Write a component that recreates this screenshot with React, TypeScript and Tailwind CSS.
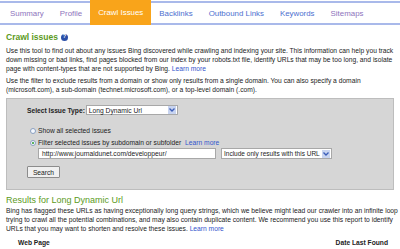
import React from 'react'

const tabs = [
    { label: 'Summary', color: 'text-[#8e74bd]' },
    { label: 'Profile', color: 'text-[#8e74bd]' },
    { label: 'Crawl Issues', active: true },
    { label: 'Backlinks', color: 'text-[#4d6fcf]' },
    { label: 'Outbound Links', color: 'text-[#4d6fcf]' },
    { label: 'Keywords', color: 'text-[#4d6fcf]' },
    { label: 'Sitemaps', color: 'text-[#8e74bd]' },
]

const Chevron = () => (
    <span className="ml-auto flex h-[8px] w-[8px] shrink-0 items-center justify-center bg-[#c8d4f0]">
        <svg width="6" height="4" viewBox="0 0 6 4">
            <path d="M0.5 0.5 L3 3 L5.5 0.5" stroke="#3b5db8" strokeWidth="1.3" fill="none" />
        </svg>
    </span>
)

const Radio = ({ checked }: { checked?: boolean }) => (
    <span className="flex h-[6px] w-[6px] items-center justify-center rounded-full border border-[#8aa0c0] bg-[#f4f8ff]">
        {checked && <span className="h-[2px] w-[2px] rounded-full bg-[#2a9a2a]" />}
    </span>
)

export default function App() {
    return (
        <div className="h-[249px] w-[400px] overflow-hidden bg-white font-['Liberation_Sans',Arial,sans-serif] text-[6.7px] leading-[9px] text-[#222]">
            {/* tab bar */}
            <div className="mt-px flex h-[24px] items-stretch gap-[16px] whitespace-nowrap border-y-2 border-[#a9b9ea] pl-[10px] text-[7.9px]">
                {tabs.map((t) =>
                    t.active ? (
                        <div
                            key={t.label}
                            className="-mx-[8px] -mt-[3px] -mb-[2px] flex items-center bg-[#f9a41a] px-[8px] text-white"
                        >
                            {t.label}
                        </div>
                    ) : (
                        <div key={t.label} className={`flex items-center ${t.color}`}>
                            {t.label}
                        </div>
                    )
                )}
            </div>

            <div className="whitespace-nowrap px-[6px]">
                {/* crawl issues */}
                <div className="mt-[6px] flex items-center gap-[3px] text-[8.5px] font-bold leading-[12px] text-[#5b9a1c]">
                    Crawl issues
                    <span className="flex h-[7px] w-[7px] items-center justify-center rounded-full bg-[#2b4fa8] text-[5.5px] leading-none text-white">
                        ?
                    </span>
                </div>
                <p className="mt-[3px]">
                    Use this tool to find out about any issues Bing discovered while crawling and indexing your site. This information can help you track
                    <br />
                    down missing or bad links, find pages blocked from our index by your robots.txt file, identify URLs that may be too long, and isolate
                    <br />
                    page with content-types that are not supported by Bing. <span className="text-[#3355cc]">Learn more</span>
                </p>
                <p className="mt-[3px]">
                    Use the filter to exclude results from a domain or show only results from a single domain. You can also specify a domain
                    <br />
                    (microsoft.com), a sub-domain (technet.microsoft.com), or a top-level domain (.com).
                </p>

                {/* filter box */}
                <div className="mt-[4px] h-[92px] border border-[#bdbdbd] bg-[#d6d6d6] pl-[20px] pt-[6px]">
                    <div className="flex items-center gap-[1px]">
                        <span className="font-bold">Select Issue Type:</span>
                        <div className="flex h-[10px] w-[92px] items-center border border-[#a8a8a8] bg-white pl-[2px] pr-[1px]">
                            Long Dynamic Url
                            <Chevron />
                        </div>
                    </div>
                    <div className="mt-[11px] flex items-center gap-[2px] pl-[3px]">
                        <Radio />
                        Show all selected issues
                    </div>
                    <div className="mt-[3px] flex items-center gap-[2px] pl-[3px]">
                        <Radio checked />
                        Filter selected issues by subdomain or subfolder
                        <span className="ml-[2px] text-[#3355cc]">Learn more</span>
                    </div>
                    <div className="mt-[1px] flex items-center gap-[5px] pl-[11px]">
                        <div className="flex h-[11px] w-[178px] items-center border border-[#a8a8a8] bg-white pl-[3px]">
                            http://www.journaldunet.com/developpeur/
                        </div>
                        <div className="flex h-[11px] w-[111px] items-center overflow-hidden border border-[#a8a8a8] bg-white pl-[2px] pr-[1px] text-[6.5px]">
                            Include only results with this URL
                            <Chevron />
                        </div>
                    </div>
                    <button className="mt-[7px] flex h-[12px] w-[33px] items-center justify-center rounded-[1px] border border-[#8c8c8c] bg-[#f0f0f0] text-[6.7px]">
                        Search
                    </button>
                </div>

                {/* results */}
                <div className="mt-[4px] text-[9px] leading-[12px] text-[#5b9a1c]">Results for Long Dynamic Url</div>
                <p>
                    Bing has flagged these URLs as having exceptionally long query strings, which we believe might lead our crawler into an infinite loop
                    <br />
                    trying to crawl all the potential combinations, and may also contain duplicate content. We recommend you use this report to identify
                    <br />
                    URLs that you may want to shorten and resolve these issues. <span className="text-[#3355cc]">Learn more</span>
                </p>
                <div className="mt-[5px] flex justify-between pl-[12px] pr-[6px] font-bold">
                    <span>Web Page</span>
                    <span>Date Last Found</span>
                </div>
            </div>
        </div>
    )
}
